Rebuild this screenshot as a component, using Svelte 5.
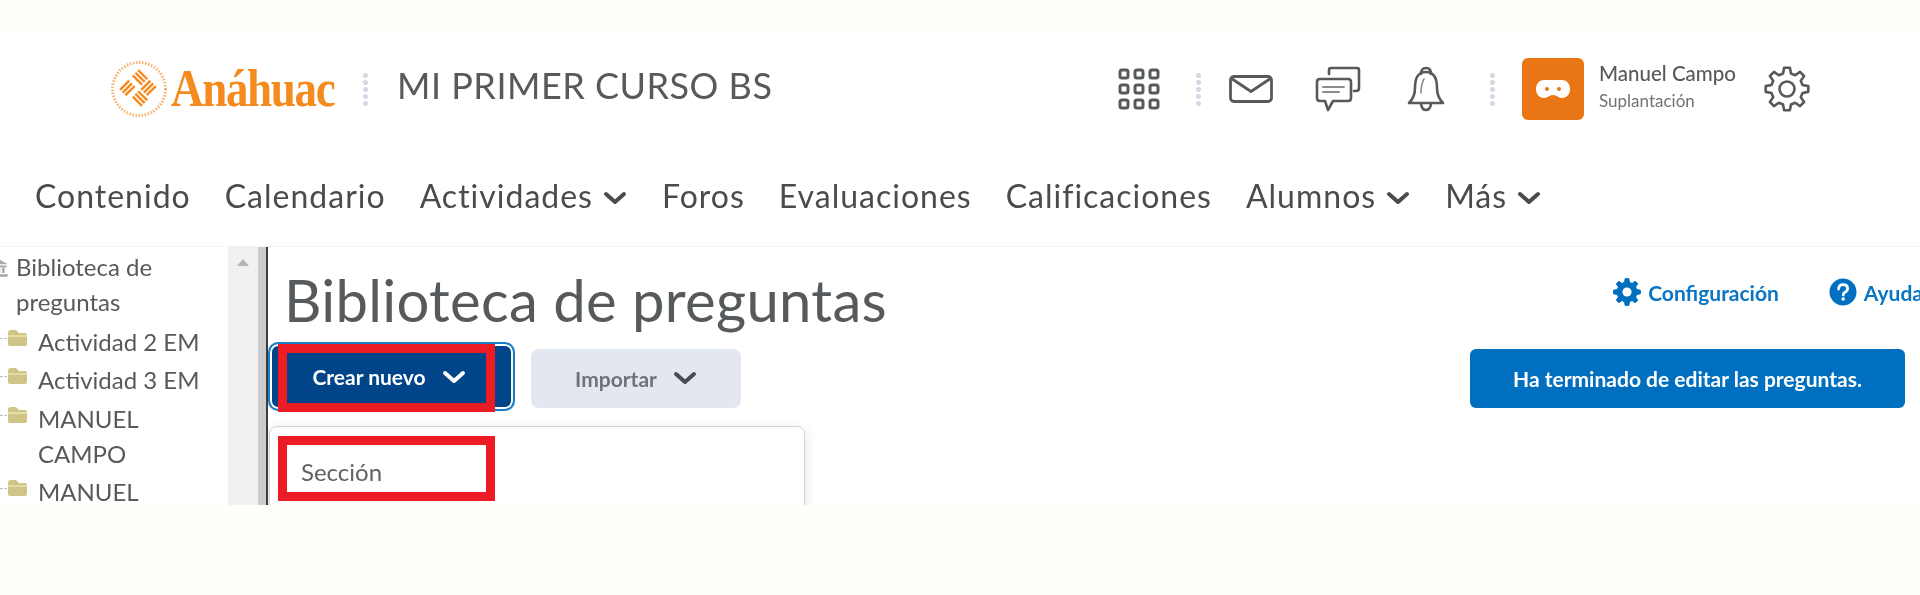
<script>
  const navItems = [
    { label: 'Contenido' },
    { label: 'Calendario' },
    { label: 'Actividades', menu: true },
    { label: 'Foros' },
    { label: 'Evaluaciones' },
    { label: 'Calificaciones' },
    { label: 'Alumnos', menu: true },
    { label: 'Más', menu: true }
  ];

  const folders = ['Actividad 2 EM', 'Actividad 3 EM', 'MANUEL CAMPO', 'MANUEL CAMPO'];

  // gear outline, used for both the header icon and the filled link icon
  function gearPath(cx, cy, outer, inner, teeth) {
    const step = (Math.PI * 2) / teeth;
    let d = '';
    for (let i = 0; i < teeth; i++) {
      const a = i * step - Math.PI / 2;
      const pts = [
        [inner, a - step * 0.32],
        [outer, a - step * 0.17],
        [outer, a + step * 0.17],
        [inner, a + step * 0.32]
      ];
      for (const [r, t] of pts) {
        const x = (cx + r * Math.cos(t)).toFixed(2);
        const y = (cy + r * Math.sin(t)).toFixed(2);
        d += (d ? 'L' : 'M') + x + ' ' + y;
      }
    }
    return d + 'Z';
  }
</script>

<div class="page">
  <header class="topbar">
    <div class="brand">
      <svg class="seal" viewBox="0 0 58 58" width="58" height="58">
        <circle cx="29" cy="29" r="26.5" fill="none" stroke="#f39a3c" stroke-width="3" stroke-dasharray="1.6 1.5" opacity="0.7" />
        <g transform="rotate(45 29 29)" fill="#f58a1f">
          <rect x="15" y="15" width="13" height="2.4" />
          <rect x="15" y="18.8" width="13" height="2.4" />
          <rect x="15" y="22.6" width="13" height="2.4" />
          <rect x="30" y="15" width="2.4" height="13" />
          <rect x="33.8" y="15" width="2.4" height="13" />
          <rect x="37.6" y="15" width="2.4" height="13" />
          <rect x="15" y="30" width="2.4" height="13" />
          <rect x="18.8" y="30" width="2.4" height="13" />
          <rect x="22.6" y="30" width="2.4" height="13" />
          <rect x="30" y="30" width="13" height="2.4" />
          <rect x="30" y="33.8" width="13" height="2.4" />
          <rect x="30" y="37.6" width="13" height="2.4" />
        </g>
      </svg>
      <span class="wordmark">Anáhuac</span>
    </div>
    <span class="dots"></span>
    <span class="course">MI PRIMER CURSO BS</span>

    <div class="tools">
      <svg class="ic-grid" viewBox="0 0 42 42" width="42" height="42" fill="none" stroke="#565a5c" stroke-width="3">
        {#each [0, 15, 30] as y}
          {#each [0, 15, 30] as x}
            <rect x={x + 2} y={y + 2} width="8" height="8" rx="2" />
          {/each}
        {/each}
      </svg>
      <span class="dots tool-dots"></span>
      <svg class="ic-mail" viewBox="0 0 44 28" width="44" height="28" fill="none" stroke="#565a5c" stroke-width="2.8" stroke-linejoin="round">
        <rect x="1.5" y="1.5" width="41" height="25" rx="3.5" />
        <path d="M2.5 3.5 L22 16.5 L41.5 3.5" />
      </svg>
      <svg class="ic-chat" viewBox="0 0 46 46" width="46" height="46" fill="none" stroke="#565a5c" stroke-width="2.6" stroke-linejoin="round" stroke-linecap="round">
        <path d="M14 8 V4 Q14 2 16 2 H42 Q44 2 44 4 V22 Q44 25 41 25 H39" />
        <path d="M5 13 H33 Q36 13 36 16 V32 Q36 35 33 35 H18 L13 44 L10 35 H5 Q2 35 2 32 V16 Q2 13 5 13 Z" />
        <path d="M8 21 H29 M8 26 H24" stroke-width="2" stroke="#8a8d8f" />
      </svg>
      <svg class="ic-bell" viewBox="0 0 38 46" width="38" height="46" fill="none" stroke="#565a5c" stroke-width="2.6" stroke-linejoin="round" stroke-linecap="round">
        <path d="M14 8 Q14 2 19 2 Q24 2 24 8" />
        <path d="M19 6 C9 6 8 15 8 22 C8 29 6 33 2 37 H36 C32 33 30 29 30 22 C30 15 29 6 19 6 Z" />
        <path d="M14 38 Q15 44 19 44 Q23 44 24 38" />
        <path d="M14 27 Q14 18 17 13" stroke-width="1.6" stroke="#8a8d8f" />
      </svg>
      <span class="dots tool-dots2"></span>
      <span class="avatar">
        <svg viewBox="0 0 36 24" width="36" height="24">
          <path d="M9 3 H27 C32 3 35 7 35 12 C35 18 31 21 27 21 C23 21 22 18 18 18 C14 18 13 21 9 21 C5 21 1 18 1 12 C1 7 4 3 9 3 Z" fill="#fff" />
          <circle cx="12" cy="12" r="2" fill="#ea7514" />
          <circle cx="24" cy="12" r="2" fill="#ea7514" />
        </svg>
      </span>
      <div class="who">
        <span class="who-name">Manuel Campo</span>
        <span class="who-role">Suplantación</span>
      </div>
      <svg class="ic-gear" viewBox="0 0 46 46" width="46" height="46" fill="none" stroke="#565a5c" stroke-width="2.6" stroke-linejoin="round">
        <path d={gearPath(23, 23, 21.5, 16, 8)} />
        <circle cx="23" cy="23" r="7.5" />
      </svg>
    </div>
  </header>

  <nav class="nav">
    {#each navItems as item}
      <span class="nav-item">
        {item.label}
        {#if item.menu}
          <svg viewBox="0 0 24 14" width="24" height="14" fill="none" stroke="#494c4e" stroke-width="4" stroke-linecap="round" stroke-linejoin="round">
            <path d="M3 3 L12 11 L21 3" />
          </svg>
        {/if}
      </span>
    {/each}
  </nav>

  <div class="body">
    <aside class="tree">
      <div class="tree-root">
        <svg viewBox="0 0 14 16" width="18" height="20" fill="#a8a8a8">
          <path d="M7 1 L14 5 H0 Z M1 6 H13 V7.5 H1 Z M2.5 8 H4.5 V12 H2.5 Z M6 8 H8 V12 H6 Z M9.5 8 H11.5 V12 H9.5 Z M0 13 H14 V15 H0 Z" />
        </svg>
        <span>Biblioteca de preguntas</span>
      </div>
      {#each folders as folder}
        <div class="tree-row">
          <span class="branch"></span>
          <svg viewBox="0 0 21 18" width="21" height="18">
            <path d="M1 4 Q1 1 4 1 H9 L12 4 H18 Q20 4 20 6 V15 Q20 17 18 17 H3 Q1 17 1 15 Z" fill="#cfc586" />
            <path d="M1 7 H20" stroke="#eee7b8" stroke-width="1.4" />
          </svg>
          <span class="tree-label">{folder}</span>
        </div>
      {/each}
    </aside>

    <div class="scrollbar">
      <span class="scroll-up"></span>
    </div>
    <div class="splitter"></div>

    <main class="main">
      <div class="main-head">
        <h1>Biblioteca de preguntas</h1>
        <div class="links">
          <span class="link">
            <svg viewBox="0 0 28 28" width="28" height="28">
              <path d={gearPath(14, 14, 13.5, 10, 8)} fill="#006fbf" stroke="#006fbf" stroke-width="1" stroke-linejoin="round" />
              <circle cx="14" cy="14" r="4.6" fill="#fff" />
            </svg>
            Configuración
          </span>
          <span class="link help">
            <svg viewBox="0 0 28 28" width="28" height="28">
              <circle cx="14" cy="14" r="13.5" fill="#006fbf" />
              <path d="M9.6 11 Q9.8 6.6 14 6.6 Q18.6 6.6 18.6 10.6 Q18.6 13 16 14.2 Q14.2 15 14.2 17" fill="none" stroke="#fff" stroke-width="2.8" stroke-linecap="round" />
              <circle cx="14.2" cy="21" r="1.8" fill="#fff" />
            </svg>
            Ayuda
          </span>
        </div>
      </div>

      <div class="actions">
        <button class="btn-primary">
          Crear nuevo
          <svg viewBox="0 0 24 14" width="24" height="14" fill="none" stroke="#fff" stroke-width="4" stroke-linecap="round" stroke-linejoin="round">
            <path d="M3 3 L12 11 L21 3" />
          </svg>
        </button>
        <button class="btn-secondary">
          Importar
          <svg viewBox="0 0 24 14" width="24" height="14" fill="none" stroke="#494c4e" stroke-width="4" stroke-linecap="round" stroke-linejoin="round">
            <path d="M3 3 L12 11 L21 3" />
          </svg>
        </button>
        <button class="btn-done">Ha terminado de editar las preguntas.</button>
      </div>

      <div class="dropdown">
        <span class="menu-item">Sección</span>
      </div>

      <!-- annotation boxes drawn on top of the screenshot -->
      <span class="mark mark-btn"></span>
      <span class="mark mark-item"></span>
    </main>
  </div>
</div>

<style>
  :global(body) {
    margin: 0;
    background: #fffefa;
  }

  .page {
    width: 1920px;
    height: 595px;
    overflow: hidden;
    font-family: Lato, 'Open Sans', sans-serif;
    color: #494c4e;
    background: #fffefa;
    padding-top: 33px;
    box-sizing: border-box;
  }

  /* the source image is a soft upscale */
  .topbar, .nav, .body {
    filter: blur(0.45px);
  }

  .topbar {
    display: flex;
    align-items: center;
    height: 143px;
    padding: 0 110px 32px;
    box-sizing: border-box;
    background: #fff;
  }

  .brand {
    display: flex;
    align-items: center;
    gap: 3px;
    width: 253px;
    flex: none;
  }

  .seal {
    flex: none;
  }

  .wordmark {
    font-family: 'Liberation Serif', serif;
    font-weight: 700;
    font-size: 52px;
    letter-spacing: -1.5px;
    color: #f58a1f;
    display: inline-block;
    transform: scaleX(0.865);
    transform-origin: left center;
  }

  .dots {
    width: 5px;
    height: 34px;
    background-image: radial-gradient(circle, #d3dbe4 2.2px, transparent 2.6px);
    background-size: 5px 7px;
    flex: none;
  }

  .course {
    margin-left: 29px;
    margin-bottom: 8px;
    font-size: 36px;
    letter-spacing: 0.5px;
    color: #565a5c;
    white-space: nowrap;
  }

  .tools {
    display: flex;
    align-items: center;
    margin-left: auto;
  }

  .ic-grid { margin-right: 36px; }
  .tool-dots { margin-right: 28px; }
  .ic-mail { margin-right: 42px; }
  .ic-chat { margin-right: 46px; }
  .ic-bell { margin-right: 45px; }
  .tool-dots2 { margin-right: 27px; }

  .avatar {
    display: flex;
    align-items: center;
    justify-content: center;
    width: 62px;
    height: 62px;
    border-radius: 6px;
    background: #ea7514;
    margin-right: 15px;
  }

  .who {
    display: flex;
    flex-direction: column;
    gap: 5px;
    width: 165px;
    margin-bottom: 6px;
  }

  .who-name {
    font-size: 20.5px;
    font-weight: 500;
    color: #565a5c;
  }

  .who-role {
    font-size: 17px;
    color: #6e7376;
  }

  .nav {
    display: flex;
    align-items: center;
    gap: 34px;
    height: 71px;
    padding: 0 0 32px 35px;
    box-sizing: border-box;
    background: #fff;
    border-bottom: 1px solid #f1f3f5;
  }

  .nav-item {
    display: flex;
    align-items: center;
    gap: 10px;
    font-size: 32px;
    letter-spacing: 1px;
    color: #494c4e;
    white-space: nowrap;
  }

  .nav-item svg {
    margin-top: 5px;
    margin-right: 1px;
  }

  .body {
    display: flex;
    height: 258px;
    background: #fff;
    overflow: hidden;
  }

  .tree {
    width: 228px;
    flex: none;
    font-size: 24px;
    line-height: 35px;
    color: #565a5c;
    padding-top: 2px;
    overflow: hidden;
    box-sizing: border-box;
  }

  .tree-root {
    position: relative;
    padding-left: 16px;
    margin-bottom: 5px;
  }

  .tree-root svg {
    position: absolute;
    left: -10px;
    top: 9px;
  }

  .tree-row {
    position: relative;
    display: flex;
    align-items: flex-start;
    padding-left: 7px;
    margin-bottom: 3.4px;
  }

  .tree-row svg {
    flex: none;
    margin-top: 5px;
    margin-right: 10px;
  }

  .branch {
    position: absolute;
    left: 0;
    top: 14px;
    width: 7px;
    border-top: 1px dashed #b9b9b9;
  }

  .tree-label {
    display: block;
    width: 170px;
  }

  .scrollbar {
    position: relative;
    width: 30px;
    flex: none;
    background: #f1f1f1;
  }

  .scroll-up {
    position: absolute;
    top: 12px;
    left: 9px;
    border-left: 6.5px solid transparent;
    border-right: 6.5px solid transparent;
    border-bottom: 7px solid #b5b5b5;
  }

  .splitter {
    width: 8px;
    flex: none;
    background: #cdcdcd;
    border-right: 2px solid #3c3c3c;
  }

  .main {
    position: relative;
    flex: 1;
    min-width: 0;
    overflow: hidden;
  }

  .main-head {
    display: flex;
    justify-content: space-between;
    align-items: flex-start;
    height: 95px;
    padding-left: 16px;
  }

  h1 {
    margin: 19px 0 0;
    font-size: 58px;
    font-weight: 400;
    letter-spacing: 0.3px;
    line-height: 68px;
    color: #565a5c;
    white-space: nowrap;
  }

  .links {
    display: flex;
    gap: 50px;
    margin-top: 31px;
    margin-right: -3px;
  }

  .link {
    display: flex;
    align-items: center;
    gap: 7px;
    font-size: 21px;
    font-weight: 700;
    color: #0a75c2;
    white-space: nowrap;
  }

  .actions {
    display: flex;
    align-items: center;
    height: 69px;
  }

  button {
    font-family: inherit;
    border: none;
    display: flex;
    align-items: center;
    justify-content: center;
    white-space: nowrap;
  }

  .btn-primary {
    width: 247px;
    height: 69px;
    padding: 0 5px 0 0;
    gap: 16px;
    font-size: 21px;
    font-weight: 700;
    color: #fff;
    background: #004489;
    border-radius: 10px;
    border: 2px solid #1a7fcb;
    box-shadow: inset 0 0 0 2px #fff;
    box-sizing: border-box;
  }

  .btn-secondary {
    width: 210px;
    height: 59px;
    margin: 4px 0 0 16px;
    padding-bottom: 2px;
    gap: 16px;
    font-size: 21px;
    font-weight: 700;
    color: #6e7376;
    background: #e3e8f0;
    border-radius: 8px;
  }

  .btn-done {
    width: 435px;
    height: 59px;
    margin: 4px 0 0 729px;
    padding-bottom: 2px;
    font-size: 21px;
    font-weight: 700;
    color: #fff;
    background: #006fbf;
    border-radius: 6px;
    flex: none;
  }

  .dropdown {
    width: 536px;
    height: 120px;
    margin-top: 15px;
    margin-left: 1px;
    border: 1px solid #cdd5dc;
    border-radius: 8px;
    box-shadow: 0 4px 14px rgba(0, 0, 0, 0.12);
    box-sizing: border-box;
    padding: 30px 0 0 31px;
    font-size: 24px;
    background: #fff;
  }

  .menu-item {
    color: #5f6366;
  }

  .mark {
    position: absolute;
    border: 9px solid #ed1c24;
    box-sizing: border-box;
    width: 217px;
  }

  .mark-btn {
    left: 10px;
    top: 97px;
    height: 68px;
  }

  .mark-item {
    left: 10px;
    top: 189px;
    height: 65px;
  }
</style>
